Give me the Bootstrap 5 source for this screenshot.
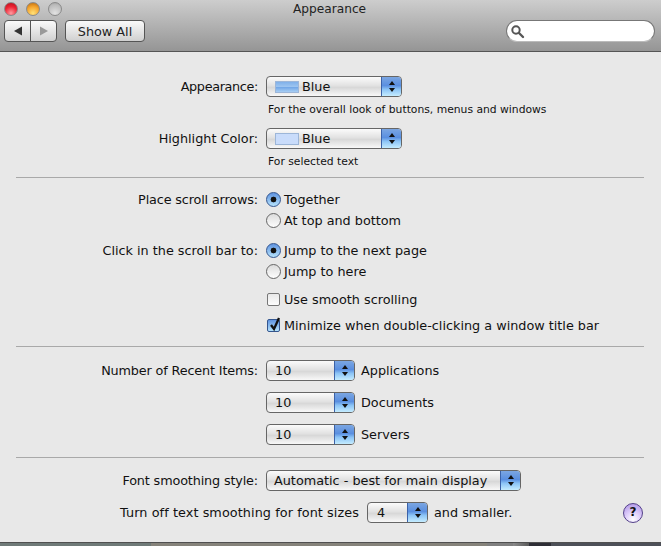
<!DOCTYPE html>
<html lang="en">
<head>
    <meta charset="UTF-8">
    <meta name="viewport" content="width=device-width, initial-scale=1.0">
    <title>Appearance</title>
    <link href="https://cdn.jsdelivr.net/npm/bootstrap@5.3.0/dist/css/bootstrap.min.css" rel="stylesheet">
    <style>
        html, body { height: 100%; }
        body {
            background: #e8e8e8;
            color: #111;
            font-family: "DejaVu Sans", "Liberation Sans", sans-serif;
            font-size: 12.8px;
            line-height: 15px;
            overflow: hidden;
        }
        .prefs-window { width: 661px; height: 546px; }
        .title-area {
            height: 52px;
            flex: none;
            background: linear-gradient(#cdcdcd, #959595);
            border-bottom: 1px solid #555;
            padding: 2px 6px 0 4px;
        }
        .title-row { display: grid; grid-template-columns: 1fr auto 1fr; height: 15px; margin-bottom: 3px; }
        .title-text { font-size: 12.2px; color: #222; }
        .light { width: 14px; height: 14px; border-radius: 50%; border: 1px solid #8a8a8a; }
        .light-red { background: radial-gradient(circle at 50% 85%, #ff9aa0, #ee2433 55%, #b00c18); }
        .light-amber { background: radial-gradient(circle at 50% 85%, #ffe27a, #f5a52e 55%, #b8660c); }
        .light-off { background: radial-gradient(circle at 50% 85%, #e2e2e2, #bbb 70%, #9d9d9d); }
        .tool-btn {
            height: 22px;
            background: linear-gradient(#fafafa, #d0d0d0);
            border: 1px solid #555;
            border-radius: 4px;
            font-size: 12.8px;
            color: #222;
        }
        .nav-pair { width: 53px; }
        .nav-pair span { flex: 1; }
        .nav-pair span + span { border-left: 1px solid #555; }
        .show-all { width: 80px; margin-left: 8px; }
        .search-box {
            width: 149px;
            height: 22px;
            margin-left: auto;
            background: #fff;
            border: 1px solid #777;
            border-bottom-color: #bbb;
            border-radius: 11px;
            padding-left: 3px;
        }
        .form-area { padding: 24px 17px 0 16px; flex: 1; }
        .field-row { display: flex; align-items: center; }
        .field-label { width: 242px; margin-right: 8px; text-align: right; flex: none; }
        .label-tight { letter-spacing: -0.15px; }
        .label-tighter { letter-spacing: -0.35px; }
        .label-loose { letter-spacing: 0.08px; }
        .sub-note { margin-left: 252px; margin-top: 6px; font-size: 10.75px; line-height: 13px; }
        .divider { border-top: 1px solid #a9a9a9; }
        .popup {
            height: 21px;
            display: flex;
            border: 1px solid #666;
            border-radius: 4px;
            background: linear-gradient(#fbfbfb 0%, #e2e2e2 45%, #d8d8d8 55%, #f8f8f8 100%);
            overflow: hidden;
            flex: none;
        }
        .popup-text { flex: 1; padding-left: 8px; display: flex; align-items: center; white-space: nowrap; }
        .popup-arrows {
            width: 20px;
            display: flex;
            flex-direction: column;
            align-items: center;
            justify-content: center;
            gap: 3px;
            border-left: 1px solid #3b62a8;
            background: linear-gradient(#7ba6e2 0%, #5a8fe0 45%, #8cc4f6 65%, #c4ecff 100%);
        }
        .tri-up { border: 3.5px solid transparent; border-top: 0; border-bottom: 4px solid #111; }
        .tri-down { border: 3.5px solid transparent; border-bottom: 0; border-top: 4px solid #111; }
        .swatch { width: 24px; height: 12px; margin-right: 3px; flex: none; border: 1px solid #9db6d8; }
        .swatch-blue { background: linear-gradient(#7fb0ea, #9cc4f0 45%, #6ea4e6 50%, #a8cef4); }
        .swatch-pale { background: #c9dcfb; }
        .popup-wide { width: 136px; }
        .popup-count { width: 89px; }
        .popup-font { width: 255px; }
        .popup-font .popup-text { padding-left: 7px; }
        .popup-size { width: 61px; margin-left: 8px; }
        .popup-size .popup-text { padding-left: 9px; }
        .after-popup { margin-left: 6px; }
        .radio-dot {
            width: 15px;
            height: 15px;
            border-radius: 50%;
            border: 1px solid #666;
            flex: none;
            background: linear-gradient(#dcdcdc, #fdfdfd);
            margin-right: 3px;
        }
        .radio-dot.is-on {
            background: radial-gradient(circle, #111 0 2.6px, transparent 3.2px), linear-gradient(#5f93e0, #b4e2fc);
            border-color: #34568f;
        }
        .check-box {
            width: 13px;
            height: 13px;
            border: 1px solid #777;
            border-radius: 2px;
            background: linear-gradient(#e8e8e8, #fdfdfd);
            margin: 0 4px 0 1px;
            flex: none;
        }
        .check-box.is-on { background: linear-gradient(#5f93e0, #b4e2fc); border-color: #34568f; }
        .check-box svg { display: block; margin-top: -4px; overflow: visible; }
        .help-btn {
            width: 20px;
            height: 20px;
            border-radius: 50%;
            border: 1px solid #54428a;
            background: radial-gradient(circle at 50% 85%, #fff, #dccbfa 45%, #a98ee2);
            font-weight: 700;
            font-size: 12px;
            color: #111;
            margin-left: auto;
            margin-right: 1px;
        }
        .edge-strip { height: 4px; flex: none; border-top: 1px solid #505050; }
        .edge-strip div { height: 100%; }
        .edge-a { width: 151px; background: #6f7a78; }
        .edge-b { width: 336px; background: #86837b; }
        .edge-c { width: 26px; background: #808080; }
        .edge-d { width: 16px; background: linear-gradient(90deg, #8a8a8a, #5a5a5a); }
        .edge-e { width: 22px; background: #2e2e36; }
        .edge-f { flex: 1; background: #4d5058; }
        .mt-radio { margin-top: 6px; }
        .mt-group { margin-top: 15px; }
        .mt-stack { margin-top: 11px; }
        .mt-note { margin-top: 12px; }
        .mt-wide { margin-top: 13px; }
        .mt-rule { margin-top: 9px; }
        .mt-after-rule { margin-top: 14px; }
    </style>
</head>
<body>
    <div class="prefs-window d-flex flex-column">
        <!-- Toolbar -->
        <div class="title-area">
            <div class="title-row">
                <div class="d-flex gap-2">
                    <div class="light light-red"></div>
                    <div class="light light-amber"></div>
                    <div class="light light-off"></div>
                </div>
                <div class="title-text">Appearance</div>
                <div></div>
            </div>
            <div class="d-flex">
                <div class="tool-btn nav-pair d-flex">
                    <span class="d-flex align-items-center justify-content-center">
                        <svg width="10" height="10" viewBox="0 0 10 10"><path d="M1 5L9 0.5V9.500z" fill="#333"/></svg>
                    </span>
                    <span class="d-flex align-items-center justify-content-center">
                        <svg width="10" height="10" viewBox="0 0 10 10"><path d="M9 5L1 0.5V9.500z" fill="#999"/></svg>
                    </span>
                </div>
                <div class="tool-btn show-all d-flex align-items-center justify-content-center">Show All</div>
                <div class="search-box d-flex align-items-center">
                    <svg width="15" height="15" viewBox="0 0 15 15"><circle cx="6" cy="6" r="3.700" fill="none" stroke="#555" stroke-width="2"/><path d="M9 9l4 4" stroke="#555" stroke-width="2.400" stroke-linecap="round"/></svg>
                </div>
            </div>
        </div>

        <div class="form-area">
            <!-- Appearance -->
            <div class="field-row">
                <div class="field-label label-tighter">Appearance:</div>
                <div class="popup popup-wide">
                    <div class="popup-text"><span class="swatch swatch-blue"></span>Blue</div>
                    <div class="popup-arrows"><div class="tri-up"></div><div class="tri-down"></div></div>
                </div>
            </div>
            <div class="sub-note">For the overall look of buttons, menus and windows</div>
            <div class="field-row mt-note">
                <div class="field-label">Highlight Color:</div>
                <div class="popup popup-wide">
                    <div class="popup-text"><span class="swatch swatch-pale"></span>Blue</div>
                    <div class="popup-arrows"><div class="tri-up"></div><div class="tri-down"></div></div>
                </div>
            </div>
            <div class="sub-note">For selected text</div>
            <div class="divider mt-rule"></div>

            <!-- Scroll bars -->
            <div class="field-row mt-after-rule">
                <div class="field-label label-tight">Place scroll arrows:</div>
                <div class="radio-dot is-on"></div><div>Together</div>
            </div>
            <div class="field-row mt-radio">
                <div class="field-label"></div>
                <div class="radio-dot"></div><div>At top and bottom</div>
            </div>
            <div class="field-row mt-group">
                <div class="field-label">Click in the scroll bar to:</div>
                <div class="radio-dot is-on"></div><div>Jump to the next page</div>
            </div>
            <div class="field-row mt-radio">
                <div class="field-label"></div>
                <div class="radio-dot"></div><div>Jump to here</div>
            </div>
            <div class="field-row mt-wide">
                <div class="field-label"></div>
                <div class="check-box"></div><div>Use smooth scrolling</div>
            </div>
            <div class="field-row mt-stack">
                <div class="field-label"></div>
                <div class="check-box is-on">
                    <svg width="15" height="17" viewBox="0 0 15 17"><path d="M3 9l3 4L11 2" fill="none" stroke="#111" stroke-width="2.300"/></svg>
                </div><div>Minimize when double-clicking a window title bar</div>
            </div>
            <div class="divider mt-wide"></div>

            <!-- Recent items -->
            <div class="field-row mt-wide">
                <div class="field-label label-tight">Number of Recent Items:</div>
                <div class="popup popup-count">
                    <div class="popup-text">10</div>
                    <div class="popup-arrows"><div class="tri-up"></div><div class="tri-down"></div></div>
                </div>
                <div class="after-popup">Applications</div>
            </div>
            <div class="field-row mt-stack">
                <div class="field-label"></div>
                <div class="popup popup-count">
                    <div class="popup-text">10</div>
                    <div class="popup-arrows"><div class="tri-up"></div><div class="tri-down"></div></div>
                </div>
                <div class="after-popup">Documents</div>
            </div>
            <div class="field-row mt-stack">
                <div class="field-label"></div>
                <div class="popup popup-count">
                    <div class="popup-text">10</div>
                    <div class="popup-arrows"><div class="tri-up"></div><div class="tri-down"></div></div>
                </div>
                <div class="after-popup">Servers</div>
            </div>
            <div class="divider mt-note"></div>

            <!-- Font smoothing -->
            <div class="field-row mt-note">
                <div class="field-label label-tight">Font smoothing style:</div>
                <div class="popup popup-font">
                    <div class="popup-text">Automatic - best for main display</div>
                    <div class="popup-arrows"><div class="tri-up"></div><div class="tri-down"></div></div>
                </div>
            </div>
            <div class="d-flex align-items-center mt-stack">
                <div class="text-end label-loose" style="width:343px">Turn off text smoothing for font sizes</div>
                <div class="popup popup-size">
                    <div class="popup-text">4</div>
                    <div class="popup-arrows"><div class="tri-up"></div><div class="tri-down"></div></div>
                </div>
                <div class="after-popup">and smaller.</div>
                <div class="help-btn d-flex align-items-center justify-content-center">?</div>
            </div>
        </div>
        <div class="edge-strip d-flex">
            <div class="edge-a"></div><div class="edge-b"></div><div class="edge-c"></div><div class="edge-d"></div><div class="edge-e"></div><div class="edge-f"></div>
        </div>
    </div>
    <script src="https://cdn.jsdelivr.net/npm/bootstrap@5.3.0/dist/js/bootstrap.bundle.min.js"></script>
</body>
</html>
